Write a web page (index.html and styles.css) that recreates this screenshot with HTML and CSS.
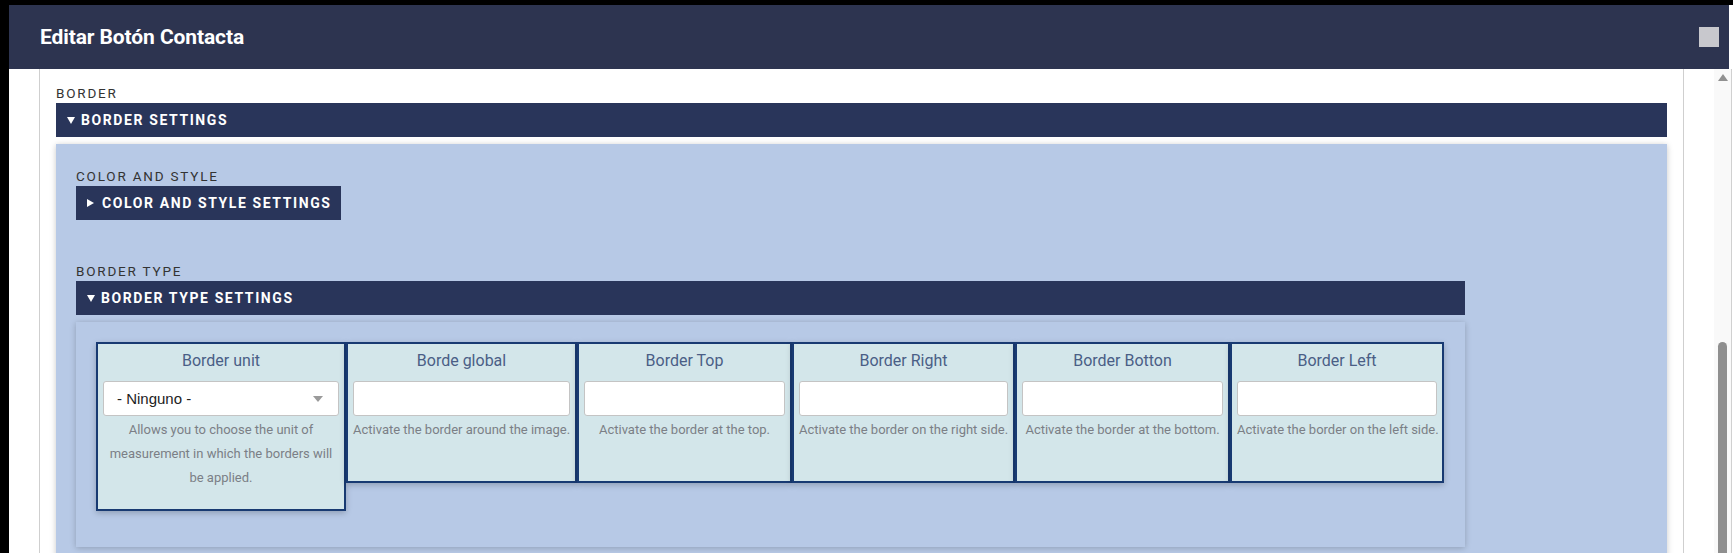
FILE: index.html
```html
<!DOCTYPE html>
<html lang="es">
<head>
<meta charset="utf-8">
<title>Editar Botón Contacta</title>
<link rel="stylesheet" href="styles.css">
</head>
<body>
<div class="modal">
  <header class="modal-header">
    <h1 class="modal-title">Editar Botón Contacta</h1>
    <button class="modal-close" aria-label="Cerrar"></button>
  </header>
  <div class="modal-body">
    <div class="frame">
      <section class="group">
        <div class="group-label">BORDER</div>
        <div class="group-bar"><span class="caret caret-down"></span>BORDER SETTINGS</div>
        <div class="panel panel-outer">
          <section class="group">
            <div class="group-label">COLOR AND STYLE</div>
            <div class="group-bar group-bar-inline"><span class="caret caret-right"></span>COLOR AND STYLE SETTINGS</div>
          </section>
          <section class="group group-type">
            <div class="group-label">BORDER TYPE</div>
            <div class="group-bar"><span class="caret caret-down"></span>BORDER TYPE SETTINGS</div>
            <div class="panel panel-inner">
              <div class="cards">
                <div class="card card-tall">
                  <div class="card-title">Border unit</div>
                  <div class="select">
                    <span class="select-value">- Ninguno -</span>
                    <span class="select-arrow"></span>
                  </div>
                  <div class="card-desc">Allows you to choose the unit of measurement in which the borders will be applied.</div>
                </div>
                <div class="card">
                  <div class="card-title">Borde global</div>
                  <div class="input"></div>
                  <div class="card-desc card-desc-line">Activate the border around the image.</div>
                </div>
                <div class="card">
                  <div class="card-title">Border Top</div>
                  <div class="input"></div>
                  <div class="card-desc card-desc-line">Activate the border at the top.</div>
                </div>
                <div class="card">
                  <div class="card-title">Border Right</div>
                  <div class="input"></div>
                  <div class="card-desc card-desc-line">Activate the border on the right side.</div>
                </div>
                <div class="card">
                  <div class="card-title">Border Botton</div>
                  <div class="input"></div>
                  <div class="card-desc card-desc-line">Activate the border at the bottom.</div>
                </div>
                <div class="card">
                  <div class="card-title">Border Left</div>
                  <div class="input"></div>
                  <div class="card-desc card-desc-line">Activate the border on the left side.</div>
                </div>
              </div>
            </div>
          </section>
        </div>
      </section>
    </div>
    <div class="gutter"></div>
    <div class="scrollbar">
      <span class="scroll-arrow"></span>
      <span class="scroll-thumb"></span>
    </div>
  </div>
</div>
</body>
</html>
```

FILE: styles.css
```css
* { box-sizing: border-box; }

html, body {
  margin: 0;
  height: 553px;
  overflow: hidden;
  background: #000;
  font-family: Roboto, "Noto Sans", Arial, sans-serif;
}

.modal {
  margin: 5px 0 0 9px;
  height: 548px;
  background: #fff;
  display: flex;
  flex-direction: column;
}

.modal-header {
  height: 64px;
  flex: none;
  margin-right: 4px;
  background: #2d3450;
  display: flex;
  align-items: center;
  justify-content: space-between;
  padding: 0 10px 0 31px;
}

.modal-title {
  margin: 0;
  color: #fff;
  font-size: 21px;
  font-weight: 700;
  letter-spacing: -0.1px;
  line-height: 24px;
}

.modal-close {
  width: 20px;
  height: 20px;
  border: 0;
  padding: 0;
  background: #c8c8cd;
}

.modal-body {
  flex: 1;
  display: flex;
  min-height: 0;
}

.frame {
  flex: 1;
  margin-left: 30px;
  border-left: 1px solid #cfcfcf;
  border-right: 1px solid #cfcfcf;
  padding: 14px 16px 0;
  overflow: hidden;
}

.gutter {
  width: 30px;
  flex: none;
}

.scrollbar {
  width: 18px;
  flex: none;
  margin-right: 1px;
  background: #f9f9f9;
  border-right: 1px solid #d0d0d0;
  display: flex;
  flex-direction: column;
  align-items: center;
  overflow: hidden;
}

.scroll-arrow {
  margin-top: 5px;
  width: 0;
  height: 0;
  border-left: 5px solid transparent;
  border-right: 5px solid transparent;
  border-bottom: 7px solid #909090;
}

.scroll-thumb {
  margin-top: 261px;
  width: 9px;
  height: 300px;
  flex: none;
  border-radius: 5px;
  background: #8f8f8f;
}

.group-label {
  font-size: 13.5px;
  line-height: 20px;
  letter-spacing: 1.8px;
  color: #333;
}

.group-bar {
  height: 34px;
  background: #29355a;
  color: #fff;
  font-size: 14px;
  font-weight: 700;
  letter-spacing: 1.6px;
  display: flex;
  align-items: center;
  padding: 0 11px;
}

.group-bar-inline {
  display: inline-flex;
  padding-right: 9px;
}

.caret {
  flex: none;
  width: 0;
  height: 0;
}

.caret-down {
  border-left: 4.5px solid transparent;
  border-right: 4.5px solid transparent;
  border-top: 7px solid #fff;
  margin-right: 6px;
}

.caret-right {
  border-top: 4.5px solid transparent;
  border-bottom: 4.5px solid transparent;
  border-left: 7px solid #fff;
  margin-right: 8px;
}

.panel {
  margin-top: 7px;
  background: #b7c9e6;
  box-shadow: 0 1px 6px rgba(0, 0, 0, 0.22);
}

.panel-outer {
  padding: 22px 20px 40px;
  min-height: 420px;
}

.group-type {
  margin-top: 41px;
  max-width: 1389px;
}

.panel-inner {
  padding: 20px 20px 36px;
}

.cards {
  display: grid;
  grid-template-columns: 250px 231px 215px 223px 215px 214px;
  align-items: start;
}

.card {
  min-height: 141px;
  border: 2px solid #183a72;
  background: #d3e6ea;
  box-shadow: 0 2px 6px rgba(0, 0, 0, 0.22);
  padding: 5px 5px 19px;
  text-align: center;
}

.card-title {
  font-size: 16px;
  line-height: 24px;
  color: #4a5e86;
  margin-bottom: 8px;
}

.select,
.input {
  height: 35px;
  background: #fff;
  border: 1px solid #c4c4c4;
  border-radius: 3px;
}

.select {
  display: flex;
  align-items: center;
  justify-content: space-between;
  padding: 0 15px 0 13px;
}

.select-value {
  font-family: "Liberation Sans", Arial, sans-serif;
  font-size: 15px;
  color: #222;
}

.select-arrow {
  width: 0;
  height: 0;
  border-left: 5.5px solid transparent;
  border-right: 5.5px solid transparent;
  border-top: 6px solid #9a9a9a;
}

.card-desc {
  margin-top: 2px;
  font-size: 13px;
  line-height: 24px;
  color: #7b7f86;
}

.card-desc-line {
  white-space: nowrap;
}
```
